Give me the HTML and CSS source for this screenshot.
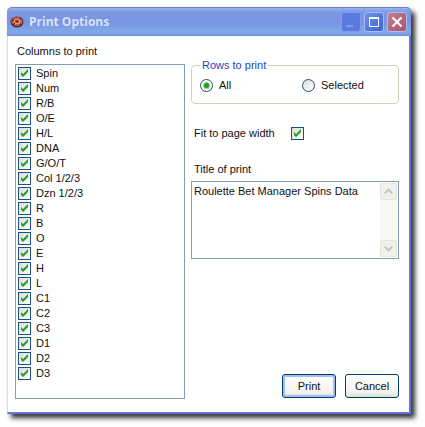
FILE: index.html
```html
<!DOCTYPE html>
<html lang="en">
<head>
  <meta charset="UTF-8" />
  <title>Print Options</title>
  <link rel="stylesheet" href="styles.css">
</head>
<body>
  <div class="window">
    <div class="titlebar">
      <svg class="app-icon" viewBox="0 0 14 14" aria-hidden="true">
        <ellipse cx="7" cy="7" rx="6.5" ry="5.5" fill="#4a3040" />
        <ellipse cx="7" cy="6.5" rx="5.5" ry="4.5" fill="#c8583c" />
        <ellipse cx="7" cy="6.5" rx="3.5" ry="2.6" fill="#e0a070" />
        <ellipse cx="7" cy="6.5" rx="2" ry="1.4" fill="#8c2c28" />
        <path d="M2 5l2 1M10 4l2-1M3 10l2-2M10 9l2 1" stroke="#40202c" />
      </svg>
      <h1>Print Options</h1>
      <div class="window-buttons">
        <button type="button" class="win-btn minimize" aria-label="Minimize" disabled>
          <svg viewBox="0 0 18 18"><path d="M4 13h7" stroke="#7f9df0" stroke-width="2" /></svg>
        </button>
        <button type="button" class="win-btn maximize" aria-label="Maximize">
          <svg viewBox="0 0 18 18"><path d="M4.500 5v8.500h9V5" fill="none" stroke="#fff" /><path d="M4 5h10" stroke="#fff" stroke-width="2" /></svg>
        </button>
        <button type="button" class="win-btn close" aria-label="Close">
          <svg viewBox="0 0 18 18"><path d="M4.500 4.500l9 9M13.500 4.500l-9 9" stroke="#fff" stroke-width="2" /></svg>
        </button>
      </div>
    </div>

    <form class="content">
      <div class="columns">
        <p class="label">Columns to print</p>
        <div class="column-list">
          <label><input type="checkbox" checked>Spin</label>
          <label><input type="checkbox" checked>Num</label>
          <label><input type="checkbox" checked>R/B</label>
          <label><input type="checkbox" checked>O/E</label>
          <label><input type="checkbox" checked>H/L</label>
          <label><input type="checkbox" checked>DNA</label>
          <label><input type="checkbox" checked>G/O/T</label>
          <label><input type="checkbox" checked>Col 1/2/3</label>
          <label><input type="checkbox" checked>Dzn 1/2/3</label>
          <label><input type="checkbox" checked>R</label>
          <label><input type="checkbox" checked>B</label>
          <label><input type="checkbox" checked>O</label>
          <label><input type="checkbox" checked>E</label>
          <label><input type="checkbox" checked>H</label>
          <label><input type="checkbox" checked>L</label>
          <label><input type="checkbox" checked>C1</label>
          <label><input type="checkbox" checked>C2</label>
          <label><input type="checkbox" checked>C3</label>
          <label><input type="checkbox" checked>D1</label>
          <label><input type="checkbox" checked>D2</label>
          <label><input type="checkbox" checked>D3</label>
        </div>
      </div>

      <div class="options">
        <fieldset>
          <legend>Rows to print</legend>
          <div class="radios">
            <label><input type="radio" name="rows" checked>All</label>
            <label><input type="radio" name="rows">Selected</label>
          </div>
        </fieldset>

        <div class="fit">
          <label for="fitWidth">Fit to page width</label>
          <input type="checkbox" id="fitWidth" checked>
        </div>

        <label class="title-label" for="printTitle">Title of print</label>
        <div class="title-box">
          <textarea id="printTitle">Roulette Bet Manager Spins Data</textarea>
          <div class="scrollbar">
            <button type="button" aria-label="Scroll up" disabled>
              <svg viewBox="0 0 16 16"><path d="M4 10l4-4 4 4" fill="none" stroke="#c4c3b8" stroke-width="2" /></svg>
            </button>
            <button type="button" aria-label="Scroll down" disabled>
              <svg viewBox="0 0 16 16"><path d="M4 6l4 4 4-4" fill="none" stroke="#c4c3b8" stroke-width="2" /></svg>
            </button>
          </div>
        </div>

        <div class="actions">
          <button type="submit" class="btn default">Print</button>
          <button type="button" class="btn">Cancel</button>
        </div>
      </div>
    </form>
  </div>
</body>
</html>
```

FILE: styles.css
```css
:root {
  --frame: #6a72d8;
  --box-border: #7f9db9;
  --check-border: #1c5180;
  --group-border: #d0d0bf;
  --group-text: #1c46c8;
  --button-border: #003c74;
}

* {
  box-sizing: border-box;
}

body {
  margin: 0;
  padding: 7px 14px 13px 7px;
  min-height: 100vh;
  display: flex;
  background-color: #fefefe;
  font-family: "Liberation Sans", Arial, sans-serif;
  font-size: 11px;
  line-height: 15px;
  color: #111;
}

.window {
  flex: 1;
  display: flex;
  flex-direction: column;
  background: #fff;
  border-right: 2px solid var(--frame);
  border-bottom: 2px solid var(--frame);
  border-left: 1px solid #d4daf4;
  border-radius: 5px 5px 0 0;
  box-shadow: 4px 4px 5px rgba(0, 0, 0, 0.8);
}

.titlebar {
  display: flex;
  align-items: center;
  height: 29px;
  margin: 0 -2px 0 -1px;
  padding: 0 4px 0 3px;
  border-top: 1px solid #6f80c4;
  border-radius: 5px 5px 0 0;
  background: linear-gradient(#98b4ee 0, #7b98e2 4px, #7a93e2 14px, #80a8e8 23px, #7c9ce4 27px, #6c80d8 28px);
}

.app-icon {
  width: 14px;
  height: 14px;
}

h1 {
  flex: 1;
  margin: 0 0 0 5px;
  font-family: "Open Sans", sans-serif;
  font-size: 12px;
  line-height: 18px;
  color: #d6e2fc;
}

.window-buttons {
  display: flex;
  gap: 3px;
}

.win-btn {
  width: 20px;
  height: 20px;
  padding: 0;
  border: 1px solid #a9bdf2;
  border-radius: 3px;
  background: linear-gradient(135deg, #6e92ea, #3a66dc);
}

.win-btn svg,
.scrollbar svg {
  display: block;
  width: 100%;
}

.minimize {
  border-color: #829ee8;
  background: #597ae0;
}

.close {
  background: linear-gradient(135deg, #c08090, #a8556c);
}

.content {
  flex: 1;
  display: grid;
  grid-template-columns: 170fr 208fr;
  gap: 6px;
  padding: 8px 10px 13px 7px;
}

.columns,
.options {
  display: flex;
  flex-direction: column;
}

.label {
  margin: 0 0 5px;
  padding-left: 2px;
}

.column-list {
  flex: 1;
  padding: 1px 2px;
  border: 1px solid var(--box-border);
}

.column-list label {
  display: flex;
  align-items: center;
  gap: 5px;
}

input {
  appearance: none;
  flex: none;
  width: 13px;
  height: 13px;
  margin: 0;
  border: 1px solid var(--check-border);
  background: linear-gradient(135deg, #dcdcd7, #fff);
}

input[type="checkbox"]:checked {
  background: url("data:image/svg+xml,%3Csvg xmlns='http://www.w3.org/2000/svg' viewBox='0 0 11 11'%3E%3Cpath d='M2 4v3l2 2 5-5V1L4 6z' fill='%2321a121'/%3E%3C/svg%3E"), linear-gradient(135deg, #dcdcd7, #fff);
}

input[type="radio"] {
  border-radius: 50%;
}

input[type="radio"]:checked {
  background: radial-gradient(circle, #21a121 2px, #fff 4px);
}

fieldset {
  min-width: 0;
  margin: 14px 0 0;
  padding: 0 8px 10px;
  border: 1px solid var(--group-border);
  border-radius: 4px;
}

legend {
  padding: 0 2px;
  line-height: 14px;
  color: var(--group-text);
}

.radios {
  display: grid;
  grid-template-columns: 1fr 1fr;
  gap: 14px;
  padding-top: 6px;
}

.radios label {
  display: flex;
  align-items: center;
  gap: 6px;
}

.fit {
  display: flex;
  align-items: center;
  gap: 16px;
  margin-top: 22px;
  padding-left: 3px;
}

.title-label {
  margin-top: 21px;
  padding-left: 3px;
}

.title-box {
  display: flex;
  height: 78px;
  margin-top: 4px;
  padding: 1px;
  border: 1px solid var(--box-border);
}

textarea {
  flex: 1;
  min-width: 0;
  padding: 1px;
  border: 0;
  outline: 0;
  resize: none;
  overflow: hidden;
  font: inherit;
  color: inherit;
}

.scrollbar {
  display: flex;
  flex-direction: column;
  justify-content: space-between;
  width: 17px;
  background: #f8f8f4;
}

.scrollbar button {
  height: 17px;
  padding: 0;
  border: 1px solid #e6e5dc;
  border-radius: 2px;
  background: #f1f0ea;
}

.actions {
  display: flex;
  justify-content: flex-end;
  gap: 9px;
  margin-top: auto;
  padding-bottom: 1px;
}

.btn {
  width: 54px;
  height: 24px;
  padding: 0;
  border: 1px solid var(--button-border);
  border-radius: 3px;
  background: linear-gradient(#fff, #f3f2ec 80%, #e0dcd0);
  font: inherit;
  color: inherit;
}

.default {
  box-shadow: inset 0 0 0 2px #a3bff0;
}
```
